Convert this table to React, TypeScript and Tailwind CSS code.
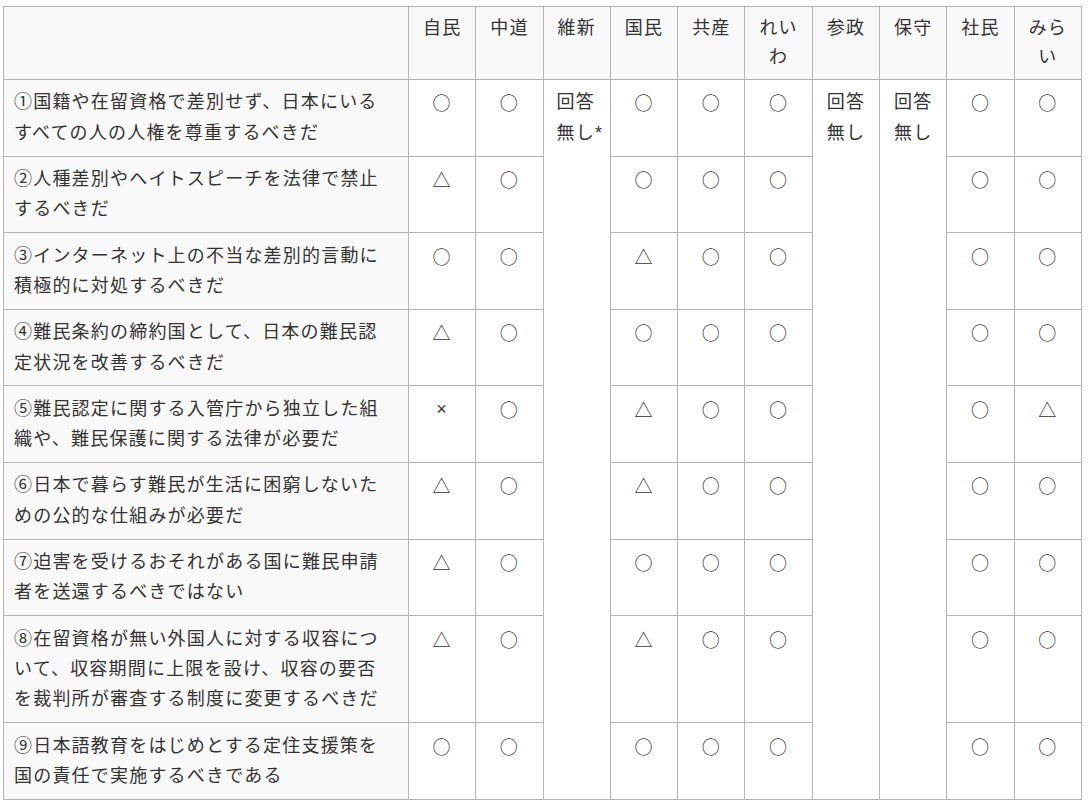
const PARTIES = ['自民', '中道', '維新', '国民', '共産', 'れいわ', '参政', '保守', '社民', 'みらい']

// answers for each question, columns without 維新/参政/保守 (those are spanned)
const ROWS = [
  { q: '①国籍や在留資格で差別せず、日本にいるすべての人の人権を尊重するべきだ', a: ['○', '○', '○', '○', '○', '○', '○'] },
  { q: '②人種差別やヘイトスピーチを法律で禁止するべきだ', a: ['△', '○', '○', '○', '○', '○', '○'] },
  { q: '③インターネット上の不当な差別的言動に積極的に対処するべきだ', a: ['○', '○', '△', '○', '○', '○', '○'] },
  { q: '④難民条約の締約国として、日本の難民認定状況を改善するべきだ', a: ['△', '○', '○', '○', '○', '○', '○'] },
  { q: '⑤難民認定に関する入管庁から独立した組織や、難民保護に関する法律が必要だ', a: ['×', '○', '△', '○', '○', '○', '△'] },
  { q: '⑥日本で暮らす難民が生活に困窮しないための公的な仕組みが必要だ', a: ['△', '○', '△', '○', '○', '○', '○'] },
  { q: '⑦迫害を受けるおそれがある国に難民申請者を送還するべきではない', a: ['△', '○', '○', '○', '○', '○', '○'] },
  { q: '⑧在留資格が無い外国人に対する収容について、収容期間に上限を設け、収容の要否を裁判所が審査する制度に変更するべきだ', a: ['△', '○', '△', '○', '○', '○', '○'] },
  { q: '⑨日本語教育をはじめとする定住支援策を国の責任で実施するべきである', a: ['○', '○', '○', '○', '○', '○', '○'] },
]

const cell = 'border border-[#b4b4b4] align-top px-[10px] py-[7.4px]'

function Mark({ v }: { v: string }) {
  // ○ and △ come from the CJK font, × stays the small latin one
  const font = v === '×' ? '' : "font-['Noto_Sans_CJK_JP',sans-serif]"
  return <td className={`${cell} bg-white text-center ${font}`}>{v}</td>
}

export default function App() {
  return (
    <div
      className="bg-white pt-[6px] pl-[3px] text-[#333] text-[18px] tracking-[1.2px]"
      style={{ fontFamily: '"Liberation Sans", "Noto Sans CJK JP", sans-serif' }}
    >
      <table className="table-fixed border-collapse w-[1079px]">
        <colgroup>
          <col className="w-[405px]" />
          {PARTIES.map(p => (
            <col key={p} />
          ))}
        </colgroup>
        <thead>
          <tr className="leading-[28.6px]">
            <th className={`${cell} bg-[#f9f9f9]`} />
            {PARTIES.map(p => (
              <th key={p} className={`${cell} bg-[#f9f9f9] font-normal text-center`}>
                {p}
              </th>
            ))}
          </tr>
        </thead>
        <tbody className="leading-[30.4px]">
          {ROWS.map((row, i) => (
            <tr key={i}>
              <td className={`${cell} bg-[#f9f9f9] pr-[16px]`}>{row.q}</td>
              <Mark v={row.a[0]} />
              <Mark v={row.a[1]} />
              {i === 0 && (
                <td rowSpan={9} className={`${cell} bg-white text-left pl-[13px] pr-0`}>
                  回答<br />
                  <span className="whitespace-nowrap">無し*</span>
                </td>
              )}
              <Mark v={row.a[2]} />
              <Mark v={row.a[3]} />
              <Mark v={row.a[4]} />
              {i === 0 && (
                <>
                  <td rowSpan={9} className={`${cell} bg-white text-center`}>
                    回答<br />無し
                  </td>
                  <td rowSpan={9} className={`${cell} bg-white text-center`}>
                    回答<br />無し
                  </td>
                </>
              )}
              <Mark v={row.a[5]} />
              <Mark v={row.a[6]} />
            </tr>
          ))}
        </tbody>
      </table>
    </div>
  )
}
